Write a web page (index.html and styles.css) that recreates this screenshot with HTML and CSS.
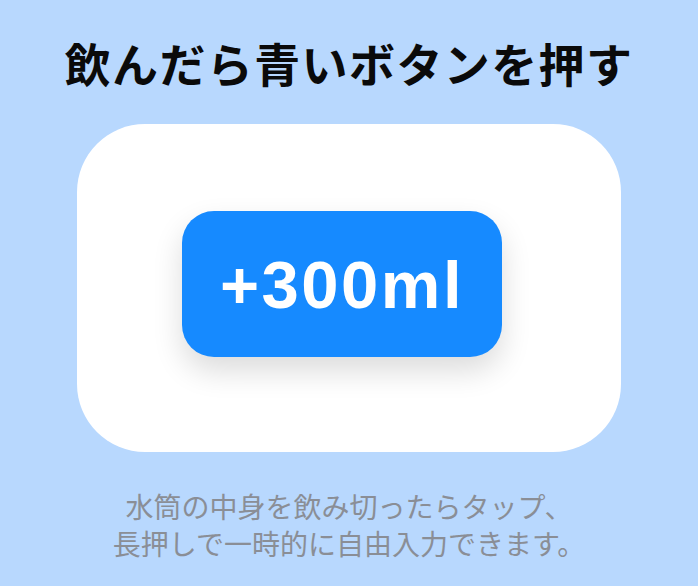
FILE: index.html
```html
<!DOCTYPE html>
<html lang="ja">
<head>
    <meta charset="UTF-8">
    <meta name="viewport" content="width=device-width, initial-scale=1.0">
    <title>水分記録</title>
    <link rel="stylesheet" href="styles.css">
</head>
<body>
    <div class="screen">
        <h1 class="title">飲んだら青いボタンを押す</h1>
        <div class="card">
            <button class="drink-button">+300ml</button>
        </div>
        <p class="hint">水筒の中身を飲み切ったらタップ、<br>長押しで一時的に自由入力できます。</p>
    </div>
</body>
</html>
```

FILE: styles.css
```css
body {
    margin: 0;
    background: #b8d8fe;
    font-family: "Noto Sans CJK JP", "Noto Sans", sans-serif;
}
.screen {
    display: flex;
    flex-direction: column;
    align-items: center;
    padding-top: 34px;
}
.title {
    margin: 0;
    font-size: 46px;
    line-height: 56px;
    font-weight: 700;
    color: #0a0a0a;
    letter-spacing: 1.4px;
}
.card {
    margin-top: 34px;
    width: 544px;
    height: 328px;
    box-sizing: border-box;
    background: #fff;
    border-radius: 68px;
    display: flex;
    justify-content: center;
    align-items: center;
    padding: 0 14px 8px 0;
}
.drink-button {
    width: 320px;
    height: 146px;
    border: none;
    border-radius: 32px;
    background: #168aff;
    color: #fff;
    font-family: "Liberation Sans", Arial, sans-serif;
    font-weight: 700;
    font-size: 67px;
    letter-spacing: 2.5px;
    box-shadow: 0 14px 30px rgba(0, 0, 0, 0.14);
    cursor: pointer;
}
.hint {
    margin: 36px 0 0;
    text-align: center;
    font-size: 28px;
    line-height: 37px;
    color: #8a8e96;
}
```
